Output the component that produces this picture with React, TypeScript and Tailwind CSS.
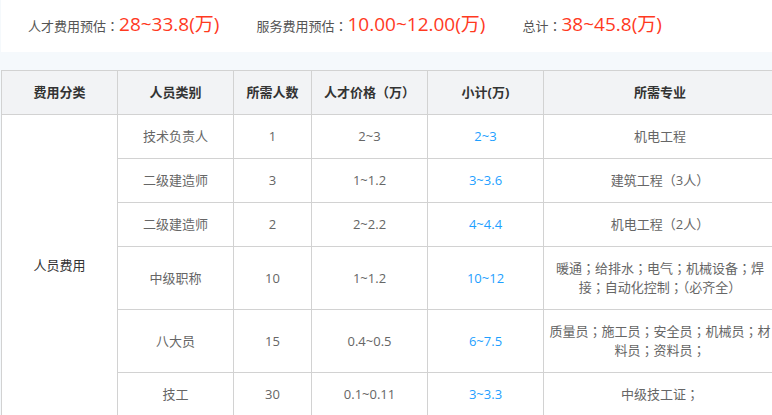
import React from "react";

const rows = [
  { type: "技术负责人", n: "1", price: "2~3", sub: "2~3", major: "机电工程" },
  { type: "二级建造师", n: "3", price: "1~1.2", sub: "3~3.6", major: "建筑工程（3人）" },
  { type: "二级建造师", n: "2", price: "2~2.2", sub: "4~4.4", major: "机电工程（2人）" },
  { type: "中级职称", n: "10", price: "1~1.2", sub: "10~12", major: "暖通；给排水；电气；机械设备；焊接；自动化控制；（必齐全）" },
  { type: "八大员", n: "15", price: "0.4~0.5", sub: "6~7.5", major: "质量员；施工员；安全员；机械员；材料员；资料员；" },
  { type: "技工", n: "30", price: "0.1~0.11", sub: "3~3.3", major: "中级技工证；" },
];

const font = { fontFamily: '"Open Sans", "Noto Sans CJK SC", sans-serif' };

const cell = "border border-[#d2d2d2] py-3 px-1";

function Punct({ text }: { text: string }) {
  const parts = text.split(/([；：])/);
  return (
    <>
      {parts.map((p, i) =>
        p === "；" || p === "：" ? (
          <span key={i} className="font-['Noto_Sans_CJK_TC'] leading-none">
            {p}
          </span>
        ) : (
          <React.Fragment key={i}>{p}</React.Fragment>
        )
      )}
    </>
  );
}

function Stat({ label, value }: { label: string; value: string }) {
  return (
    <div className="flex items-baseline">
      <span className="text-[13px] text-[#555]">
        <Punct text={label} />
      </span>
      <span className="text-[19px] text-[#ff3a1f] leading-none">{value}</span>
    </div>
  );
}

export default function App() {
  return (
    <div className="w-[772px] h-[415px] overflow-hidden bg-[#f5f9fc] pl-px" style={font}>
      <div className="h-[52px] bg-white flex items-center pl-[27px] gap-[37px]">
        <Stat label="人才费用预估：" value="28~33.8(万)" />
        <Stat label="服务费用预估：" value="10.00~12.00(万)" />
        <Stat label="总计：" value="38~45.8(万)" />
      </div>
      <div className="mt-[18px]">
        <table className="table-fixed border-collapse w-[775px] text-[13px] leading-[19px] text-center bg-white">
          <colgroup>
            <col className="w-[116px]" />
            <col className="w-[116px]" />
            <col className="w-[78px]" />
            <col className="w-[116px]" />
            <col className="w-[116px]" />
            <col className="w-[233px]" />
          </colgroup>
          <thead>
            <tr className="bg-[#f2f3f5] text-[#333]">
              <th className={`${cell} font-bold`}>费用分类</th>
              <th className={`${cell} font-bold`}>人员类别</th>
              <th className={`${cell} font-bold`}>所需人数</th>
              <th className={`${cell} font-bold`}>人才价格（万）</th>
              <th className={`${cell} font-bold`}>小计(万)</th>
              <th className={`${cell} font-bold`}>所需专业</th>
            </tr>
          </thead>
          <tbody>
            {rows.map((r, i) => (
              <tr key={i}>
                {i === 0 && (
                  <td rowSpan={6} className="border border-[#d2d2d2] px-1 text-[#333] align-middle">
                    人员费用
                  </td>
                )}
                <td className={`${cell} text-[#666]`}>{r.type}</td>
                <td className={`${cell} text-[#666]`}>{r.n}</td>
                <td className={`${cell} text-[#666]`}>{r.price}</td>
                <td className={`${cell} text-[#1e9fff]`}>{r.sub}</td>
                <td className={`${cell} text-[#666]`}>
                  <Punct text={r.major} />
                </td>
              </tr>
            ))}
          </tbody>
        </table>
      </div>
    </div>
  );
}
